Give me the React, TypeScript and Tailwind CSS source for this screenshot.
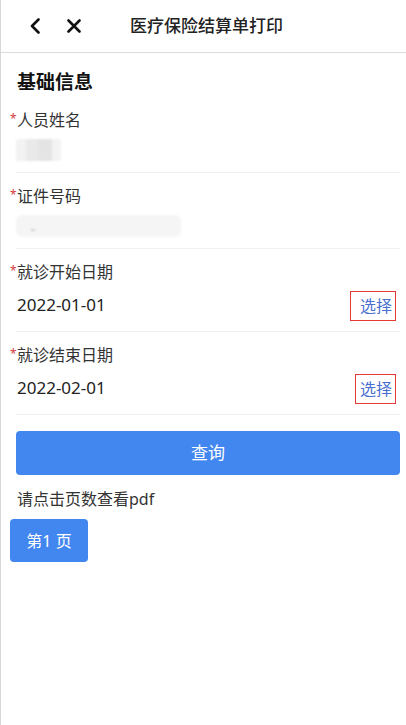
import React from "react";

const font = { fontFamily: '"Noto Sans", "Noto Sans CJK SC", sans-serif' };

function Star() {
  return <span className="-ml-[7px] w-[7px] text-[12px] leading-none text-[#d23b3b] self-start mt-[5px]">*</span>;
}

function Label({ text }: { text: string }) {
  return (
    <div className="flex h-[24px] items-center pl-[1px]">
      <Star />
      <span className="text-[16px] leading-[24px] text-[#333]">{text}</span>
    </div>
  );
}

function TextField({ label, blurW }: { label: string; blurW: number }) {
  return (
    <div className="border-b border-[#f1f1f1] pt-[11px] pb-[4px]">
      <Label text={label} />
      <div className="flex h-[36px] items-center">
        {blurW < 100 ? (
          <div className="flex h-[22px] w-[45px] overflow-hidden rounded-[3px] blur-[1px]">
            <div className="w-[10px] bg-[#f2f2f2]" />
            <div className="w-[12px] bg-[#e9e9e9]" />
            <div className="w-[14px] bg-[#e4e4e4]" />
            <div className="w-[9px] bg-[#f3f3f3]" />
          </div>
        ) : (
          <div className="relative h-[22px] w-[165px] rounded-[6px] bg-[#f5f5f5] blur-[1px]">
            <div className="absolute left-[15px] top-[14px] h-[2px] w-[4px] bg-[#cfcfcf]" />
          </div>
        )}
      </div>
    </div>
  );
}

function DateField({ label, value, boxPl }: { label: string; value: string; boxPl: string }) {
  return (
    <div className="border-b border-[#f1f1f1] pt-[11px] pb-[3px]">
      <Label text={label} />
      <div className="flex h-[44px] items-center justify-between pr-[4px]">
        <span className="-mt-[2px] pl-[1px] text-[17px] text-[#222]">{value}</span>
        <span className={`flex h-[30px] items-center border border-[#e53935] pr-[3px] text-[16px] text-[#4a6fcf] ${boxPl}`}>选择</span>
      </div>
    </div>
  );
}

export default function App() {
  return (
    <div style={font} className="min-h-[725px] w-[406px] border-l border-[#d8d8d8] bg-white">
      <div className="flex h-[53px] items-center border-b border-[#dcdcdc]">
        <svg className="ml-[28px]" width="12" height="16" viewBox="0 0 12 16" fill="none">
          <path d="M9.5 1.5 L3 8 L9.5 14.5" stroke="#111" strokeWidth="2.6" strokeLinecap="round" strokeLinejoin="round" />
        </svg>
        <svg className="ml-[26px]" width="14" height="14" viewBox="0 0 14 14" fill="none">
          <path d="M1.5 1.5 L12.5 12.5 M12.5 1.5 L1.5 12.5" stroke="#111" strokeWidth="2.6" strokeLinecap="round" />
        </svg>
        <span className="ml-[49px] text-[17px] font-medium text-[#222]">医疗保险结算单打印</span>
      </div>
      <div className="pl-[15px] pr-[6px] pt-[16px]">
        <div className="mb-[2px] pl-[1px] text-[19px] font-bold leading-[26px] text-[#111]">基础信息</div>
        <TextField label="人员姓名" blurW={45} />
        <TextField label="证件号码" blurW={165} />
        <DateField label="就诊开始日期" value="2022-01-01" boxPl="pl-[9px]" />
        <DateField label="就诊结束日期" value="2022-02-01" boxPl="pl-[4px]" />
        <button className="mt-[16px] flex h-[44px] w-full items-center justify-center rounded-[4px] bg-[#4286ef] text-[17px] text-white">
          查询
        </button>
        <div className="mt-[12px] pl-[1px] text-[16px] leading-[24px] text-[#333]">请点击页数查看pdf</div>
        <button className="-ml-[6px] mt-[8px] flex h-[43px] w-[78px] items-center justify-center rounded-[4px] bg-[#4286ef] text-[16px] text-white">
          第1 页
        </button>
      </div>
    </div>
  );
}
